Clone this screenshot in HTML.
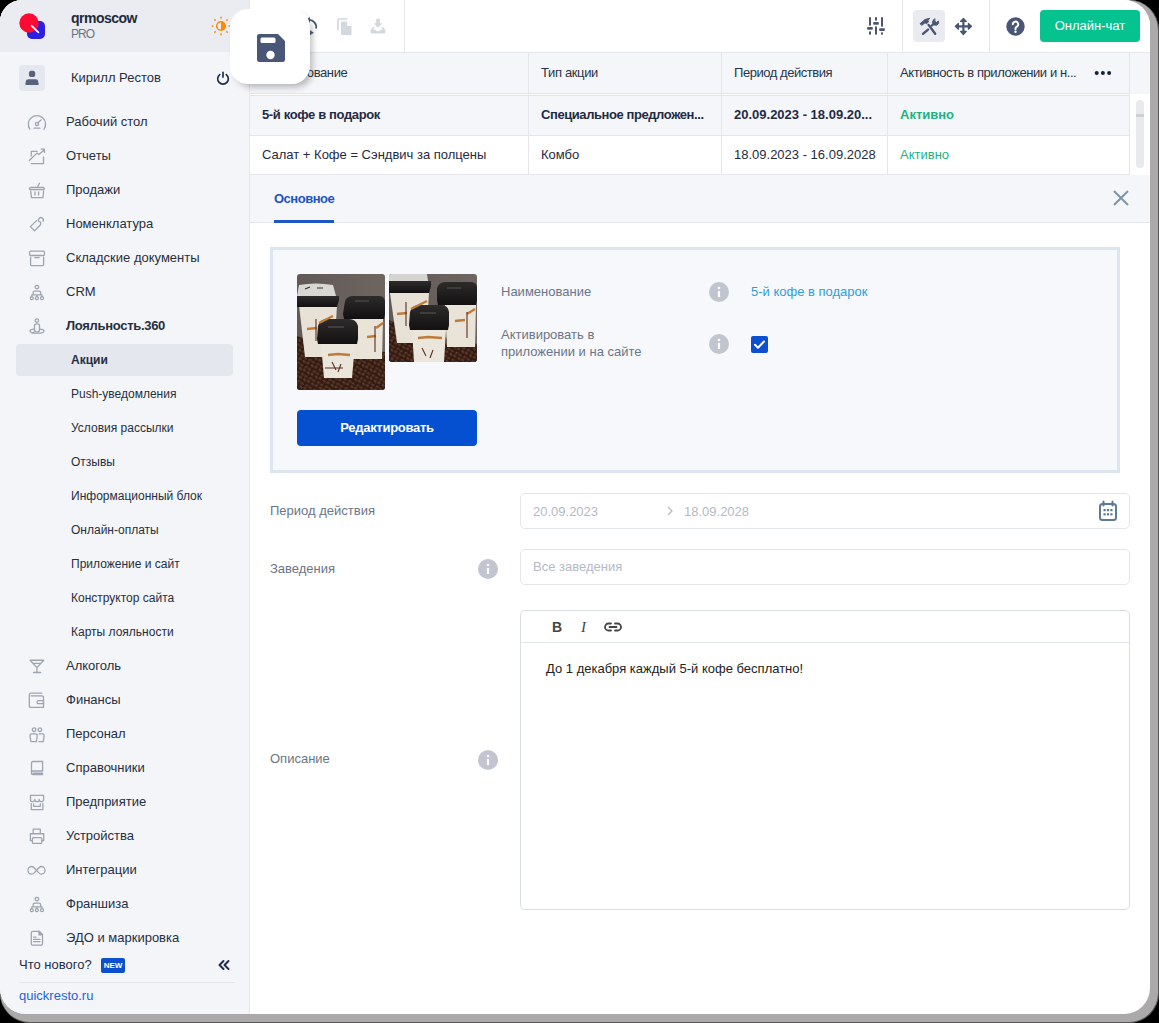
<!DOCTYPE html>
<html><head><meta charset="utf-8">
<style>
*{box-sizing:border-box;margin:0;padding:0}
html,body{width:1159px;height:1023px;overflow:hidden;background:#000}
body{font-family:"Liberation Sans",sans-serif;font-size:13px;color:#1f2a3c;position:relative}
.abs{position:absolute}
#shadow{position:absolute;left:0;top:0;width:1159px;height:1023px;border-radius:22px 30px 30px 30px;background:#aba9a9;border-right:1px solid #5a5959;border-bottom:1px solid #5a5959}
#app{position:absolute;left:0;top:0;width:1150px;height:1014px;border-radius:22px 26px 26px 26px;overflow:hidden;background:#fff}
#side{position:absolute;left:0;top:0;width:250px;height:1014px;background:#f4f5f9;border-right:1px solid #e4e6eb}
#sidehead{position:absolute;left:0;top:0;width:249px;height:52px;background:#eaecf1}
.t{position:absolute;white-space:nowrap;line-height:16px;margin-top:1px}
.mi{position:absolute;margin-top:1px;left:66px;white-space:nowrap;line-height:16px;color:#262f40}
.si{position:absolute;margin-top:1px;font-size:12px;left:71px;white-space:nowrap;line-height:16px;color:#262f40}
.ic{position:absolute;left:27px;width:20px;height:20px}
#top{position:absolute;left:250px;top:0;width:900px;height:53px;background:#fff;border-bottom:1px solid #e4e6eb}
.vsep{position:absolute;top:0;width:1px;height:52px;background:#e4e6eb}
</style></head><body>
<div id="shadow"></div>
<div id="app">
  <div id="side">
    
    <div id="sidehead"></div>
    <svg class="abs" style="left:17px;top:10px" width="32" height="32" viewBox="0 0 32 32">
      <rect x="10" y="11" width="18" height="18" rx="5" fill="#2b20e0"/>
      <circle cx="12" cy="13" r="9.7" fill="#ff0a33"/>
      <path d="M14.7 15.8L21.4 22.3" stroke="#fff" stroke-width="1.8" stroke-linecap="round"/>
    </svg>
    <div class="t" style="left:71px;top:9px;font-weight:bold;font-size:14px;letter-spacing:-0.5px;color:#1f2a3c">qrmoscow</div>
    <div class="t" style="left:71px;top:25px;font-size:12px;letter-spacing:-1px;color:#6b7385">PRO</div>
    <svg class="abs" style="left:211px;top:16px" width="20" height="20" viewBox="0 0 20 20">
      <circle cx="10" cy="10" r="4.3" fill="none" stroke="#ff8a00" stroke-width="1.6"/>
      <path d="M10 5.7a4.3 4.3 0 0 1 0 8.6z" fill="#ff8a00"/>
      <g stroke="#ff8a00" stroke-width="1.6" stroke-linecap="round">
        <path d="M10 1.3v.6M10 18.1v.6M1.3 10h.6M18.1 10h.6M3.8 3.8l.4.4M15.8 15.8l.4.4M3.8 16.2l.4-.4M15.8 4.2l.4-.4"/>
      </g>
    </svg>
    <div class="abs" style="left:19px;top:65px;width:26px;height:26px;border-radius:4px;background:#e5e8ee"></div>
    <svg class="abs" style="left:19px;top:65px" width="26" height="26" viewBox="0 0 26 26">
      <rect x="9.9" y="5.8" width="6.3" height="6.3" rx="2.6" fill="#56627c"/>
      <path d="M6.3 20L6.8 16.6C7.1 15.2 8 14.35 9.5 14.35h7c1.5 0 2.4.85 2.7 2.25L19.8 20z" fill="#56627c"/>
    </svg>
    <div class="t" style="left:71px;top:69px;color:#262f40">Кирилл Рестов</div>
    <svg class="abs" style="left:215px;top:70px" width="16" height="16" viewBox="0 0 18 18" fill="none" stroke="#1e2d4f" stroke-width="1.9" stroke-linecap="round">
      <path d="M5.3 5.2A6 6 0 1 0 12.7 5.2M9 2.5v5.5"/>
    </svg>
    <div class="abs" style="left:16px;top:344px;width:217px;height:32px;border-radius:4px;background:#e4e7ed"></div>
<div class="mi" style="top:113px">Рабочий стол</div>
<svg class="ic" style="top:112px" viewBox="0 0 20 20" fill="none" stroke="#9ea4b0" stroke-width="1.3" stroke-linecap="round" stroke-linejoin="round"><path d="M2.9 17.2A8.6 8.6 0 1 1 17 17.2"/><circle cx="10" cy="11.9" r="1.6"/><path d="M11.2 10.6L14 8M7 16.2h6"/></svg>
<div class="mi" style="top:147px">Отчеты</div>
<svg class="ic" style="top:146px" viewBox="0 0 20 20" fill="none" stroke="#9ea4b0" stroke-width="1.3" stroke-linecap="round" stroke-linejoin="round"><path d="M4.25 9.9V5.4h5.9M2.3 14.5L9.9 7.1l2 1.4 5.4-4.8M14.2 3.2h3.3v3.3M16.5 11v6.6H4.25"/></svg>
<div class="mi" style="top:181px">Продажи</div>
<svg class="ic" style="top:180px" viewBox="0 0 20 20" fill="none" stroke="#9ea4b0" stroke-width="1.3" stroke-linecap="round" stroke-linejoin="round"><path d="M10.2 7.5l2.3-4.3"/><rect x="2.5" y="7.5" width="14.8" height="2.2" rx="1"/><path d="M3.7 11l.8 6.7H16l.6-6.7M8 12v3M11.6 12v3"/></svg>
<div class="mi" style="top:215px">Номенклатура</div>
<svg class="ic" style="top:214px" viewBox="0 0 20 20" fill="none" stroke="#9ea4b0" stroke-width="1.3" stroke-linecap="round" stroke-linejoin="round"><path d="M9.6 6.6L3.4 12.6l4.2 4.2 6-6V8"/><path d="M12.3 7.8A2.4 2.4 0 1 1 16 7.2"/></svg>
<div class="mi" style="top:249px">Складские документы</div>
<svg class="ic" style="top:248px" viewBox="0 0 20 20" fill="none" stroke="#9ea4b0" stroke-width="1.3" stroke-linecap="round" stroke-linejoin="round"><rect x="2.6" y="3.2" width="14.9" height="4.3" rx="1"/><path d="M3.6 9.2v7.2a1.2 1.2 0 0 0 1.2 1.2h10.6a1.2 1.2 0 0 0 1.2-1.2V9.2M7.7 9.6h4.5"/></svg>
<div class="mi" style="top:283px">CRM</div>
<svg class="ic" style="top:282px" viewBox="0 0 20 20" fill="none" stroke="#9ea4b0" stroke-width="1.3" stroke-linecap="round" stroke-linejoin="round"><circle cx="9.9" cy="5.1" r="1.8"/><path d="M6.2 12.6V10.6a1.5 1.5 0 0 1 1.5-1.5h4.4a1.5 1.5 0 0 1 1.5 1.5v2M4.8 14.6V12.8H15v1.8M9.9 12.8v1.8"/><circle cx="4.8" cy="16.2" r="1.5"/><circle cx="9.9" cy="16.2" r="1.5"/><circle cx="15" cy="16.2" r="1.5"/></svg>
<div class="mi" style="top:317px;font-weight:bold;letter-spacing:-0.3px">Лояльность.360</div>
<svg class="ic" style="top:316px" viewBox="0 0 20 20" fill="none" stroke="#9ea4b0" stroke-width="1.3" stroke-linecap="round" stroke-linejoin="round"><circle cx="9.9" cy="4.6" r="1.7"/><rect x="7.5" y="7.8" width="5" height="8" rx="2"/><path d="M7.4 13.2C4.5 13.5 3 14.1 3 14.9c0 1.2 3.1 2.2 7 2.2s7-1 7-2.2c0-.8-1.5-1.4-4.4-1.7M5.5 17.1l1.2-1"/></svg>
<div class="si" style="top:351px;font-weight:bold">Акции</div>
<div class="si" style="top:385px">Push-уведомления</div>
<div class="si" style="top:419px">Условия рассылки</div>
<div class="si" style="top:453px">Отзывы</div>
<div class="si" style="top:487px">Информационный блок</div>
<div class="si" style="top:521px">Онлайн-оплаты</div>
<div class="si" style="top:555px">Приложение и сайт</div>
<div class="si" style="top:589px">Конструктор сайта</div>
<div class="si" style="top:623px">Карты лояльности</div>
<div class="mi" style="top:657px">Алкоголь</div>
<svg class="ic" style="top:656px" viewBox="0 0 20 20" fill="none" stroke="#9ea4b0" stroke-width="1.3" stroke-linecap="round" stroke-linejoin="round"><path d="M3.1 4.25h13.65L9.9 11.6zM6.5 7.4h6.8M9.9 11.6v4.9M6.5 16.5h7.1"/></svg>
<div class="mi" style="top:691px">Финансы</div>
<svg class="ic" style="top:690px" viewBox="0 0 20 20" fill="none" stroke="#9ea4b0" stroke-width="1.3" stroke-linecap="round" stroke-linejoin="round"><path d="M14.8 3.2H3.8a1.5 1.5 0 0 0-1.5 1.5v11.2a1.5 1.5 0 0 0 1.5 1.5h12.7V7.3a1.5 1.5 0 0 0-1.5-1.5H4"/><rect x="10.2" y="10.6" width="6.3" height="3.1" rx="1"/></svg>
<div class="mi" style="top:725px">Персонал</div>
<svg class="ic" style="top:724px" viewBox="0 0 20 20" fill="none" stroke="#9ea4b0" stroke-width="1.3" stroke-linecap="round" stroke-linejoin="round"><circle cx="7.1" cy="5.7" r="1.8"/><circle cx="12.9" cy="5.7" r="1.8"/><path d="M4 17.6L3.1 13v-2a1.2 1.2 0 0 1 1.2-1.2h4.6a1.2 1.2 0 0 1 1.2 1.2v2l-.8 4.6zM12 9.8h3.8a1.2 1.2 0 0 1 1.2 1.2v2l-.8 4.6h-4.4"/></svg>
<div class="mi" style="top:759px">Справочники</div>
<svg class="ic" style="top:758px" viewBox="0 0 20 20" fill="none" stroke="#9ea4b0" stroke-width="1.3" stroke-linecap="round" stroke-linejoin="round"><path d="M4.5 16V5a1.5 1.5 0 0 1 1.5-1.5h9.6V13H6a1.5 1.5 0 0 0-1.5 1.5v.5A1.5 1.5 0 0 0 6 16.5h9.6M6.2 15.2h9.4"/></svg>
<div class="mi" style="top:793px">Предприятие</div>
<svg class="ic" style="top:792px" viewBox="0 0 20 20" fill="none" stroke="#9ea4b0" stroke-width="1.3" stroke-linecap="round" stroke-linejoin="round"><path d="M3.5 3.4h13.1v4.1a2.18 2.18 0 0 1-4.37 0a2.18 2.18 0 0 1-4.37 0a2.18 2.18 0 0 1-4.37 0zM4.25 11.6v6h11.65v-6M6.6 12v2.3h6.7V12"/></svg>
<div class="mi" style="top:827px">Устройства</div>
<svg class="ic" style="top:826px" viewBox="0 0 20 20" fill="none" stroke="#9ea4b0" stroke-width="1.3" stroke-linecap="round" stroke-linejoin="round"><path d="M6.2 7.5V3.2h7.1v4.3M5.4 14.6H3.4V7.75h13.35v6.85h-2"/><rect x="5.4" y="11.7" width="9.4" height="5.7" rx="1"/></svg>
<div class="mi" style="top:861px">Интеграции</div>
<svg class="ic" style="top:860px" viewBox="0 0 20 20" fill="none" stroke="#9ea4b0" stroke-width="1.3" stroke-linecap="round" stroke-linejoin="round"><path d="M9.5 10.35C7.5 8 6 6.5 4.8 6.5a3.85 3.85 0 0 0 0 7.7c1.2 0 2.7-1.5 4.7-3.85s3.5-3.85 4.7-3.85a3.85 3.85 0 0 1 0 7.7c-1.2 0-2.7-1.5-4.7-3.85z"/></svg>
<div class="mi" style="top:895px">Франшиза</div>
<svg class="ic" style="top:894px" viewBox="0 0 20 20" fill="none" stroke="#9ea4b0" stroke-width="1.3" stroke-linecap="round" stroke-linejoin="round"><circle cx="9.9" cy="5.1" r="1.8"/><path d="M6.2 12.6V10.6a1.5 1.5 0 0 1 1.5-1.5h4.4a1.5 1.5 0 0 1 1.5 1.5v2M4.8 14.6V12.8H15v1.8M9.9 12.8v1.8"/><circle cx="4.8" cy="16.2" r="1.5"/><circle cx="9.9" cy="16.2" r="1.5"/><circle cx="15" cy="16.2" r="1.5"/></svg>
<div class="mi" style="top:929px">ЭДО и маркировка</div>
<svg class="ic" style="top:928px" viewBox="0 0 20 20" fill="none" stroke="#9ea4b0" stroke-width="1.3" stroke-linecap="round" stroke-linejoin="round"><path d="M5.8 3.3H12l3.5 3.5v8.9a1.5 1.5 0 0 1-1.5 1.5H5.8a1.5 1.5 0 0 1-1.5-1.5V4.8a1.5 1.5 0 0 1 1.5-1.5zM6.5 9.1H9M6.5 11.4H13M6.5 13.6H13"/><path d="M12 3.3v3.5h3.5z" fill="#9ea4b0"/></svg>
    <div class="t" style="left:19px;top:956px;color:#262f40">Что нового?</div>
    <div class="abs" style="left:101px;top:958px;width:24px;height:15px;border-radius:2px;background:#0d4fcf;color:#fff;font-size:8px;font-weight:bold;line-height:15px;text-align:center">NEW</div>
    <svg class="abs" style="left:216px;top:957px" width="16" height="16" viewBox="0 0 16 16" fill="none" stroke="#1e2d4f" stroke-width="2" stroke-linecap="round" stroke-linejoin="round"><path d="M7.5 4l-4 4 4 4M12.5 4l-4 4 4 4"/></svg>
    <div class="abs" style="left:19px;top:982px;width:216px;height:1px;background:#e2e5ea"></div>
    <div class="t" style="left:19px;top:987px;color:#2462d8">quickresto.ru</div>

  </div>
  
  <div id="top">
    <svg class="abs" style="left:50px;top:14px" width="24" height="24" viewBox="0 0 24 24" fill="none" stroke="#4a5673" stroke-width="1.8">
      <path d="M8.5 6A7 7 0 0 1 16 14.5"/><path d="M5.5 6l4.5-3v6z" fill="#4a5673" stroke="none"/>
      <path d="M10 16.2L13.9 18.7L10 21.3z" fill="#56627c" stroke="none"/>
    </svg>
    <svg class="abs" style="left:87px;top:17.7px" width="16" height="18" viewBox="0 0 16 18">
      <path d="M1 12.5V2a1 1 0 0 1 1-1h8.5" fill="none" stroke="#d3d7df" stroke-width="1.6"/>
      <path d="M4 4.5a1 1 0 0 1 1-1h5.5l4 4V16a1 1 0 0 1-1 1H5a1 1 0 0 1-1-1z" fill="#d3d7df"/>
      <path d="M10.5 3.5V7.5h4" fill="#fff" stroke="#fff" stroke-width="0.9"/>
    </svg>
    <svg class="abs" style="left:120px;top:18px" width="17" height="16" viewBox="0 0 17 16" fill="#d3d7df">
      <rect x="6.2" y="0.8" width="3.6" height="5.5"/><path d="M3.6 5.3H12.4L8 9.8z"/>
      <path d="M0.5 12.3L2.8 9H4.6L3.2 11.8H5.5L6.8 13.3H9.2L10.5 11.8H12.8L11.4 9H13.2L15.5 12.3V14A1.5 1.5 0 0 1 14 15.5H2A1.5 1.5 0 0 1 .5 14z"/>
    </svg>
    <div class="vsep" style="left:154px"></div>
    <svg class="abs" style="left:617px;top:16px" width="19" height="19" viewBox="0 0 19 19" fill="#4a5673">
      <rect x="2" y="1.1" width="2" height="8.6" rx="0.8"/><rect x="0.1" y="11.1" width="5.7" height="2.7" rx="0.8"/><rect x="2" y="15.2" width="2" height="3.5" rx="0.8"/>
      <rect x="8" y="1.1" width="2" height="3.7" rx="0.8"/><rect x="6.2" y="6.1" width="5.6" height="2.6" rx="0.8"/><rect x="8" y="10.2" width="2" height="8.5" rx="0.8"/>
      <rect x="14" y="1.1" width="2" height="9.7" rx="0.8"/><rect x="12.1" y="12.2" width="5.8" height="2.7" rx="0.8"/><rect x="14" y="16.3" width="2" height="2.4" rx="0.8"/>
    </svg>
    <div class="vsep" style="left:652px"></div>
    <div class="abs" style="left:663px;top:10px;width:32px;height:32px;border-radius:4px;background:#e9ebf0"></div>
    <svg class="abs" style="left:669px;top:17px" width="22" height="19" viewBox="0 0 22 19" fill="#4a5673" stroke="#4a5673" stroke-linecap="round">
      <path d="M9.6 7.9L16.2 16.8M4 16.8L9 12.6M12.9 8.5L15.5 6" stroke-width="2.4" fill="none"/>
      <path d="M1.3 6.5L6 2.5L10.7 1.3L9 3.3L9.5 5L7.3 6.8L6 5.7L3 8.2z" stroke-width="1" stroke-linejoin="round"/>
      <path d="M14.3 7.3a3.1 3.1 0 0 1 0.2-4.3l1.3-1.4v2.6l1.6 1.2l2.1-1.3a3.1 3.1 0 0 1-4.1 3.9z" stroke-width="1" stroke-linejoin="round"/>
    </svg>
    <svg class="abs" style="left:704px;top:17px" width="19" height="19" viewBox="0 0 19 19" fill="#4a5673" stroke="#4a5673" stroke-linejoin="round">
      <path d="M8.3 3h2.2v13H8.3zM3 8.2h13v2.2H3z" stroke="none"/>
      <path d="M9.4 1.3L12.3 4.4H6.5zM9.4 17.5L12.3 14.4H6.5zM1.3 9.3L4.4 6.4V12.2zM17.5 9.3L14.4 6.4V12.2z" stroke-width="1.2"/>
    </svg>
    <div class="vsep" style="left:739px"></div>
    <svg class="abs" style="left:756px;top:17px" width="19" height="19" viewBox="0 0 19 19">
      <circle cx="9.5" cy="9.5" r="9.2" fill="#4a5673"/>
      <path d="M6.8 7.3a2.7 2.7 0 1 1 4 2.4c-.9.5-1.3 1-1.3 2v.6" fill="none" stroke="#fff" stroke-width="2" stroke-linecap="round"/>
      <circle cx="9.5" cy="14.7" r="1.2" fill="#fff"/>
    </svg>
    <div class="abs" style="left:790px;top:10px;width:100px;height:32px;border-radius:4px;background:#06c28e;color:#fff;text-align:center;line-height:32px">Онлайн-чат</div>
  </div>

  <div id="thead" class="abs" style="left:250px;top:53px;width:900px;height:41px;background:#f4f6f9"></div><div class="abs" style="left:250px;top:93px;width:880px;height:3px;border-top:1px solid #e1e4ea;border-bottom:1px solid #e1e4ea;background:#fff"></div>
  <div class="abs" style="left:250px;top:96px;width:879px;height:40px;background:#f4f6f9;border-bottom:1px solid #e4e6eb"></div>
  <div class="abs" style="left:250px;top:136px;width:879px;height:39px;background:#fff;border-bottom:1px solid #e4e6eb"></div>
  <div class="vsep" style="left:528px;top:53px;height:122px"></div>
  <div class="vsep" style="left:721px;top:53px;height:122px"></div>
  <div class="vsep" style="left:887px;top:53px;height:122px"></div>
  <div class="vsep" style="left:1129px;top:53px;height:122px"></div>
  <div class="t" style="left:262px;top:64px;color:#2a3447;letter-spacing:-0.4px">Наименование</div>
  <div class="t" style="left:541px;top:64px;color:#2a3447;letter-spacing:-0.35px">Тип акции</div>
  <div class="t" style="left:734px;top:64px;color:#2a3447;letter-spacing:-0.45px">Период действия</div>
  <div class="t" style="left:900px;top:64px;color:#2a3447;letter-spacing:-0.42px">Активность в приложении и н...</div>
  <svg class="abs" style="left:1092px;top:70px" width="20" height="6" viewBox="0 0 20 6" fill="#14213d"><circle cx="4.7" cy="3" r="2"/><circle cx="10.9" cy="3" r="2"/><circle cx="17.1" cy="3" r="2"/></svg>
  <div class="t" style="left:262px;top:106px;font-weight:bold;color:#1f2a44;letter-spacing:-0.37px">5-й кофе в подарок</div>
  <div class="t" style="left:541px;top:106px;font-weight:bold;color:#1f2a44;letter-spacing:-0.42px">Специальное предложен...</div>
  <div class="t" style="left:734px;top:106px;font-weight:bold;color:#1f2a44">20.09.2023 - 18.09.20...</div>
  <div class="t" style="left:900px;top:106px;font-weight:bold;color:#1cb37f">Активно</div>
  <div class="t" style="left:262px;top:146px;color:#1f2a44">Салат + Кофе = Сэндвич за полцены</div>
  <div class="t" style="left:541px;top:146px;color:#1f2a44">Комбо</div>
  <div class="t" style="left:734px;top:146px;color:#1f2a44">18.09.2023 - 16.09.2028</div>
  <div class="t" style="left:900px;top:146px;color:#1cb37f">Активно</div>
  <div class="abs" style="left:1136px;top:100px;width:8px;height:68px;border-radius:4px;background:#e8eaee"></div>
  <div class="abs" style="left:1136px;top:114px;width:8px;height:3px;background:#cdd0d5"></div>

  <div class="abs" style="left:250px;top:175px;width:900px;height:48px;background:#f4f6f9;border-bottom:1px solid #e4e6eb"></div>
  <div class="t" style="left:274px;top:190px;font-weight:bold;color:#1b54c4;letter-spacing:-0.5px">Основное</div>
  <div class="abs" style="left:274px;top:220px;width:60px;height:3px;background:#1f57c8"></div>
  <svg class="abs" style="left:1112px;top:189px" width="18" height="18" viewBox="0 0 18 18" stroke="#7e95a5" stroke-width="2"><path d="M2 2l14 14M16 2L2 16"/></svg>


  <div class="abs" style="left:270px;top:247px;width:850px;height:226px;border:3px solid #dce6f0;background:#f6f8fb"></div>
  <svg class="abs" style="left:297px;top:274px" width="88" height="116" viewBox="0 0 88 116">
    <defs><clipPath id="c1"><rect width="88" height="116" rx="3"/></clipPath>
    <linearGradient id="bg1" x1="0" y1="0" x2="1" y2="0"><stop offset="0" stop-color="#615956"/><stop offset="1" stop-color="#6f6662"/></linearGradient>
    <pattern id="beans" width="9" height="8" patternUnits="userSpaceOnUse" patternTransform="rotate(28)"><ellipse cx="2.5" cy="2" rx="2" ry="1.4" fill="#553022" transform="rotate(20 2.5 2)"/><ellipse cx="7" cy="6" rx="2" ry="1.5" fill="#4e2c20" transform="rotate(-30 7 6)"/><ellipse cx="6.5" cy="1.5" rx="1.6" ry="1.2" fill="#623a28"/><ellipse cx="2" cy="6.2" rx="1.7" ry="1.2" fill="#5a3424"/><circle cx="2" cy="1.5" r="0.6" fill="#85553d"/><circle cx="6.6" cy="5.5" r="0.6" fill="#7a4a36"/></pattern><linearGradient id="lid" x1="0" y1="0" x2="0" y2="1"><stop offset="0" stop-color="#2e2b2b"/><stop offset="1" stop-color="#121010"/></linearGradient></defs>
    <g clip-path="url(#c1)">
      <rect width="88" height="116" fill="url(#bg1)"/>
      <path d="M0 62q20 8 40 10l48 6v38H0z" fill="#2e1a12"/><path d="M0 62q20 8 40 10l48 6v38H0z" fill="url(#beans)"/>
      
      <path d="M2 31h38l-3 52H8z" fill="#e7e1d6"/>
      <path d="M0 22h42v4l-2 7H0z" fill="url(#lid)"/>
      <path d="M2 11q17-3 34 0l3 11H0z" fill="#d9d7d4"/>
      <path d="M8 15l5-2M20 14h6" stroke="#333" stroke-width="1.2"/>
      <path d="M53 45h33l-1 40H55z" fill="#e9e3d8"/>
      <path d="M48 27q2-5 8-5h26q5 0 6 5v13l-1 5H47l-1-5z" fill="url(#lid)"/>
      <path d="M58 27h14" stroke="#555" stroke-width="1.2"/>
      <path d="M24 70h34l-3 34H27z" fill="#ebe6dc"/>
      <path d="M21 52q2-7 9-7h22q7 0 9 7v13l-1 5H21l-1-5z" fill="url(#lid)"/>
      <path d="M31 53h16" stroke="#4a4747" stroke-width="1.4"/>
      <path d="M10 55l10-1M22 49l14-7M70 63l9-1M79 54l7-5M31 81l10-1 12 1" stroke="#c07a3a" stroke-width="2.3" fill="none"/>
      <path d="M19 45v22M78 52v26M35 88l4 8M44 90l-3 8M28 94h18" stroke="#5a2e22" stroke-width="1.1" fill="none"/>
    </g>
  </svg>
  <svg class="abs" style="left:389px;top:274px" width="88" height="88" viewBox="0 0 88 88">
    <defs><clipPath id="c2"><rect width="88" height="88" rx="3"/></clipPath></defs>
    <g clip-path="url(#c2)">
      <rect width="88" height="88" fill="url(#bg1)"/>
      <path d="M0 46q20 10 40 14l48 10v18H0z" fill="#2e1a12"/><path d="M0 46q20 10 40 14l48 10v18H0z" fill="url(#beans)"/>
      
      <path d="M1 19h39l-3 50H8z" fill="#e7e1d6"/>
      <path d="M0 7h42v5l-2 7H0z" fill="url(#lid)"/>
      <path d="M0 0h38l1 7H0z" fill="#d6d4d1"/>
      <path d="M56 31h31l-1 42H58z" fill="#e9e3d8"/>
      <path d="M48 14q2-6 8-6h26q6 0 6 6v12l-1 5H49l-1-5z" fill="url(#lid)"/>
      <path d="M58 14h14" stroke="#555" stroke-width="1.2"/>
      <path d="M23 56h34l-2 32H25z" fill="#ebe6dc"/>
      <path d="M21 38q2-7 9-7h22q7 0 8 7v13l-1 5H21l-1-5z" fill="url(#lid)"/>
      <path d="M31 39h16" stroke="#4a4747" stroke-width="1.4"/>
      <path d="M8 40l10-1M22 35l16-8M66 47l10-1M78 40l8-5M29 64l10-1 14 1" stroke="#c07a3a" stroke-width="2.3" fill="none"/>
      <path d="M17 28v24M78 38v26M33 74l4 8M44 76l-3 8" stroke="#5a2e22" stroke-width="1.1" fill="none"/>
    </g>
  </svg>
  <div class="abs" style="left:297px;top:410px;width:180px;height:36px;border-radius:4px;background:#0550d0;color:#fff;font-weight:bold;text-align:center;line-height:36px;letter-spacing:-0.28px">Редактировать</div>

  <div class="t" style="left:501px;top:283px;color:#6b7588">Наименование</div>
  <div class="t" style="left:501px;top:326px;color:#6b7588;line-height:16.5px">Активировать в<br>приложении и на сайте</div>
  <svg class="abs info" style="left:709px;top:282px" width="20" height="20" viewBox="0 0 20 20"><circle cx="10" cy="10" r="10" fill="#c0c5cf"/><rect x="8.9" y="9.1" width="2.2" height="5.9" rx="0.3" fill="#fff"/><circle cx="10" cy="6" r="1.3" fill="#fff"/></svg>
  <svg class="abs info" style="left:709px;top:334px" width="20" height="20" viewBox="0 0 20 20"><circle cx="10" cy="10" r="10" fill="#c0c5cf"/><rect x="8.9" y="9.1" width="2.2" height="5.9" rx="0.3" fill="#fff"/><circle cx="10" cy="6" r="1.3" fill="#fff"/></svg>
  <div class="t" style="left:751px;top:283px;color:#2d9fd8">5-й кофе в подарок</div>
  <svg class="abs" style="left:751px;top:336px" width="17" height="17" viewBox="0 0 17 17"><rect width="17" height="17" rx="2" fill="#0c4fd0"/><path d="M4 8.7l3 3 6-6.2" fill="none" stroke="#fff" stroke-width="2" stroke-linecap="round" stroke-linejoin="round"/></svg>

  <div class="t" style="left:270px;top:502px;color:#6b7588">Период действия</div>
  <div class="abs" style="left:520px;top:493px;width:610px;height:36px;border:1px solid #e3e6eb;border-radius:5px"></div>
  <div class="t" style="left:533px;top:503px;color:#b5bac4">20.09.2023</div>
  <svg class="abs" style="left:666px;top:506px" width="8" height="10" viewBox="0 0 8 10" fill="none" stroke="#b5bac4" stroke-width="1.2"><path d="M2 1l4 4-4 4"/></svg>
  <div class="t" style="left:684px;top:503px;color:#b5bac4">18.09.2028</div>
  <svg class="abs" style="left:1098px;top:500px" width="20" height="22" viewBox="0 0 20 22" fill="none" stroke="#5f7a93" stroke-width="2">
    <rect x="2" y="4" width="16" height="16" rx="2.5"/><path d="M5.5 1.5v4M14.5 1.5v4" stroke-linecap="round"/>
    <g fill="#5f7a93" stroke="none"><rect x="5.5" y="9" width="2.2" height="2.2"/><rect x="8.9" y="9" width="2.2" height="2.2"/><rect x="12.3" y="9" width="2.2" height="2.2"/><rect x="5.5" y="13.2" width="2.2" height="2.2"/><rect x="8.9" y="13.2" width="2.2" height="2.2"/><rect x="12.3" y="13.2" width="2.2" height="2.2"/></g>
  </svg>

  <div class="t" style="left:270px;top:560px;color:#6b7588">Заведения</div>
  <svg class="abs info" style="left:478px;top:559px" width="20" height="20" viewBox="0 0 20 20"><circle cx="10" cy="10" r="10" fill="#c0c5cf"/><rect x="8.9" y="9.1" width="2.2" height="5.9" rx="0.3" fill="#fff"/><circle cx="10" cy="6" r="1.3" fill="#fff"/></svg>
  <div class="abs" style="left:520px;top:549px;width:610px;height:36px;border:1px solid #e3e6eb;border-radius:5px"></div>
  <div class="t" style="left:533px;top:558px;color:#b5bac4">Все заведения</div>

  <div class="t" style="left:270px;top:750px;color:#6b7588">Описание</div>
  <svg class="abs info" style="left:478px;top:750px" width="20" height="20" viewBox="0 0 20 20"><circle cx="10" cy="10" r="10" fill="#c0c5cf"/><rect x="8.9" y="9.1" width="2.2" height="5.9" rx="0.3" fill="#fff"/><circle cx="10" cy="6" r="1.3" fill="#fff"/></svg>
  <div class="abs" style="left:520px;top:610px;width:610px;height:300px;border:1px solid #d9dee5;border-radius:5px"></div>
  <div class="abs" style="left:521px;top:642px;width:608px;height:1px;background:#e3e6eb"></div>
  <div class="t" style="left:552px;top:618px;font-weight:bold;font-size:14px;color:#444">B</div>
  <div class="t" style="left:581px;top:618px;font-style:italic;font-family:'Liberation Serif',serif;font-size:15px;color:#444">I</div>
  <svg class="abs" style="left:604px;top:621px" width="18" height="12" viewBox="0 0 18 12" fill="none" stroke="#444" stroke-width="1.8" stroke-linecap="round"><path d="M7 2.5H4.5a3.5 3.5 0 0 0 0 7H7M11 2.5h2.5a3.5 3.5 0 0 1 0 7H11M5.5 6h7"/></svg>
  <div class="t" style="left:546px;top:660px;color:#222">До 1 декабря каждый 5-й кофе бесплатно!</div>

  <div class="abs" style="left:230px;top:9px;width:80px;height:75px;border-radius:18px;background:#fff;box-shadow:4px 5px 7px -2px rgba(0,0,0,0.28)"></div>
  <svg class="abs" style="left:257px;top:34px" width="28" height="28" viewBox="0 0 28 28">
    <path d="M0 2.5A2.5 2.5 0 0 1 2.5 0H21l7 7v18.5a2.5 2.5 0 0 1-2.5 2.5h-23A2.5 2.5 0 0 1 0 25.5z" fill="#4a5677"/>
    <rect x="3.5" y="3.5" width="15" height="5.5" rx="1.5" fill="#fff"/>
    <circle cx="13.5" cy="21" r="4.2" fill="#fff"/>
  </svg>
</div>
</body></html>
